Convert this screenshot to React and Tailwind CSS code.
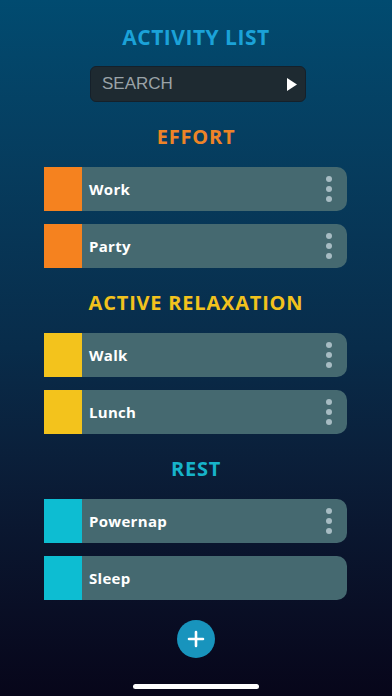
import React from "react";

const sections = [
  {
    title: "EFFORT",
    titleClass: "text-[#ee8427]",
    swatch: "bg-[#f5821f]",
    items: [
      { name: "Work", menu: true },
      { name: "Party", menu: true },
    ],
  },
  {
    title: "ACTIVE RELAXATION",
    titleClass: "text-[#f2c21d]",
    swatch: "bg-[#f3c31c]",
    items: [
      { name: "Walk", menu: true },
      { name: "Lunch", menu: true },
    ],
  },
  {
    title: "REST",
    titleClass: "text-[#17b3c9]",
    swatch: "bg-[#0dbdd2]",
    items: [
      { name: "Powernap", menu: true },
      { name: "Sleep", menu: false },
    ],
  },
];

const ActivityRow = ({ name, swatch, menu }) => (
  <div className="flex h-[44px] items-stretch overflow-hidden rounded-r-[10px] bg-[#456970]">
    <div className={`w-[38px] ${swatch}`} />
    <div className="flex flex-1 items-center pl-[7px] text-[15px] font-bold tracking-[0.3px] text-white">
      {name}
    </div>
    {menu && (
      <div className="flex w-[36px] flex-col items-center justify-center gap-[4px]">
        <span className="h-[6px] w-[6px] rounded-full bg-[#a7bcc3]" />
        <span className="h-[6px] w-[6px] rounded-full bg-[#a7bcc3]" />
        <span className="h-[6px] w-[6px] rounded-full bg-[#a7bcc3]" />
      </div>
    )}
  </div>
);

export default function App() {
  return (
    <div className="relative flex h-[696px] w-[392px] flex-col items-center overflow-hidden bg-gradient-to-b from-[#014b70] via-[#082c4a] to-[#07061a] font-['Open_Sans',sans-serif]">
      <h1 className="mt-[24px] text-[21px] leading-[26px] font-bold tracking-[0.5px] text-[#1ba2d8]">
        ACTIVITY LIST
      </h1>

      {/* Search */}
      <div className="mt-[16px] ml-[4px] flex h-[36px] w-[216px] items-center justify-between rounded-[6px] border border-[#15202a] bg-[#1e2a31] pr-[7px] pl-[11px]">
        <span className="font-['Liberation_Sans',sans-serif] text-[17px] text-[#9aa3a8]">SEARCH</span>
        <svg width="12" height="15" viewBox="0 0 12 15">
          <path d="M1 1 L11 7.5 L1 14 Z" fill="#ffffff" />
        </svg>
      </div>

      <div className="mt-[22px] flex w-full flex-col gap-[22px]">
        {sections.map((s) => (
          <div key={s.title} className="flex flex-col items-center">
            <h2 className={`mb-[17px] text-[20px] leading-[26px] font-bold tracking-[0.8px] ${s.titleClass}`}>
              {s.title}
            </h2>
            <div className="ml-[44px] flex w-[303px] flex-col gap-[13px] self-start">
              {s.items.map((it) => (
                <ActivityRow key={it.name} name={it.name} swatch={s.swatch} menu={it.menu} />
              ))}
            </div>
          </div>
        ))}
      </div>

      {/* Add button */}
      <button className="mt-[20px] flex h-[38px] w-[38px] items-center justify-center rounded-full bg-[#1894bd]">
        <svg width="18" height="18" viewBox="0 0 18 18">
          <path d="M9 2 V16 M2 9 H16" stroke="#ffffff" strokeWidth="2.6" strokeLinecap="round" />
        </svg>
      </button>

      {/* Home indicator */}
      <div className="absolute bottom-[7px] left-1/2 h-[5px] w-[126px] -translate-x-1/2 rounded-full bg-white" />
    </div>
  );
}
